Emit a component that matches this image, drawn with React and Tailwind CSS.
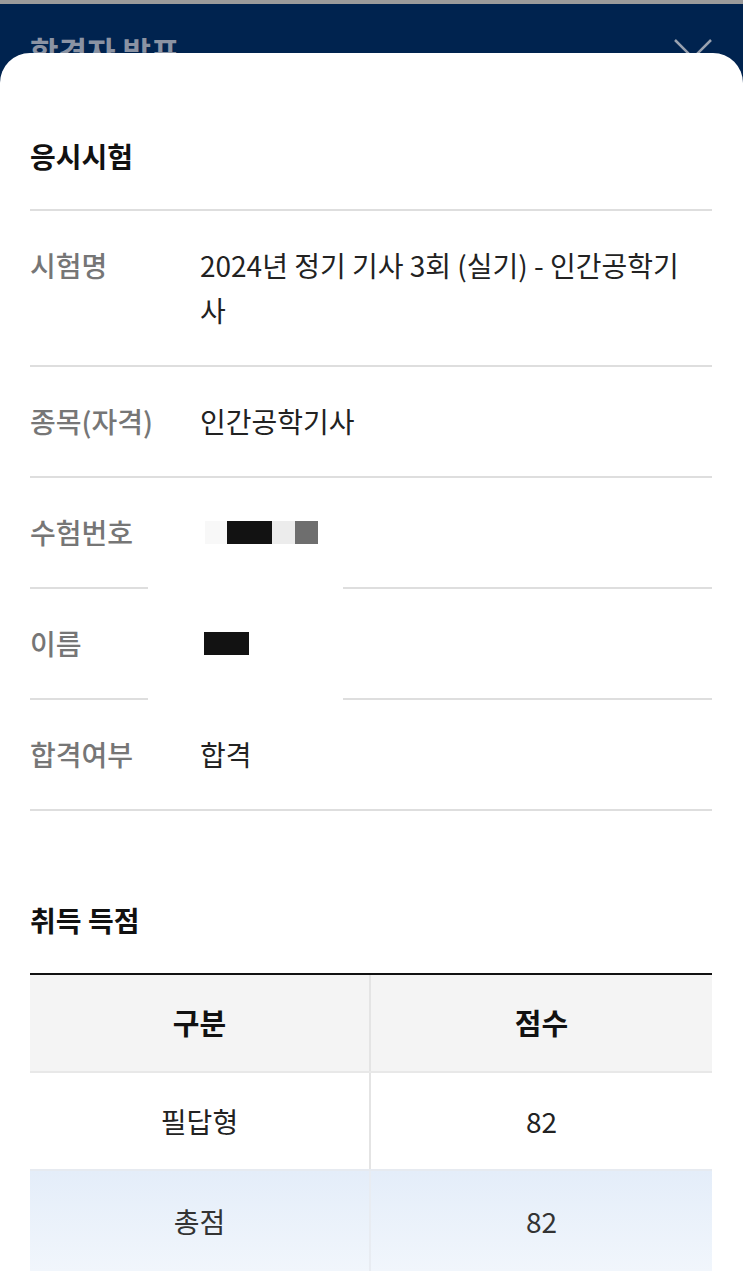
const rows = [
  { label: '시험명', value: ['2024년 정기 기사 3회 (실기) - 인간공학기', '사'] },
  { label: '종목(자격)', value: ['인간공학기사'] },
  { label: '수험번호', redact: 'number', broken: true },
  { label: '이름', redact: 'name', broken: true },
  { label: '합격여부', value: ['합격'] },
];

const Divider = ({ broken }) =>
  broken ? (
    <div className="flex">
      <div className="h-[2px] w-[118px] bg-[#dedede]" />
      <div className="w-[195px]" />
      <div className="h-[2px] flex-1 bg-[#dedede]" />
    </div>
  ) : (
    <div className="h-[2px] bg-[#dedede]" />
  );

const Redacted = ({ kind }) =>
  kind === 'number' ? (
    <div className="flex h-[45px] items-center">
      <div className="ml-[5px] flex h-[23px]">
        <div className="w-[22px] bg-[#f8f8f8]" />
        <div className="w-[45px] bg-[#121212]" />
        <div className="w-[23px] bg-[#ececec]" />
        <div className="w-[23px] bg-[#6e6e6e]" />
      </div>
    </div>
  ) : (
    <div className="flex h-[45px] items-center">
      <div className="ml-[4px] h-[23px] w-[45px] bg-[#121212]" />
    </div>
  );

export default function App() {
  return (
    <div
      className="flex min-h-[1275px] flex-col bg-[#00234f]"
      style={{ fontFamily: '"Noto Sans CJK KR", "Noto Sans", sans-serif' }}
    >
      <div className="h-[4px] bg-[#9b9b9b]" />
      <div className="relative h-[49px] overflow-hidden px-[30px]">
        <div className="pt-[24px] text-[31px] font-bold leading-[45px] text-[#8b93a3]">합격자 발표</div>
        <svg className="absolute left-[673px] top-[34px] h-[40px] w-[40px]" viewBox="0 0 40 40">
          <path d="M2 2 L38 38 M38 2 L2 38" stroke="#9aa2b0" strokeWidth="2.5" fill="none" />
        </svg>
      </div>

      <div className="flex-1 rounded-t-[30px] bg-white pl-[30px] pr-[31px] pt-[81px]">
        <h2 className="mb-[30px] text-[28px] font-bold leading-[45px] text-[#111]">응시시험</h2>
        <Divider />

        {rows.map((row) => (
          <div key={row.label}>
            <div className="flex py-[32px] text-[28px] leading-[45px]">
              <div className="w-[170px] shrink-0 font-medium text-[#767676]">{row.label}</div>
              {row.redact ? (
                <Redacted kind={row.redact} />
              ) : (
                <div className="text-[#222]">
                  {row.value.map((line, i) => (
                    <div key={i}>{line}</div>
                  ))}
                </div>
              )}
            </div>
            <Divider broken={row.broken} />
          </div>
        ))}

        <h2 className="mt-[87px] mb-[30px] text-[28px] font-bold leading-[45px] text-[#111]">취득 득점</h2>

        <div className="border-t-2 border-[#111]">
          <div className="grid h-[96px] grid-cols-2 bg-[#f4f4f4] text-[29px] font-bold text-[#111]">
            <div className="flex items-center justify-center border-r-2 border-[#e4e4e4]">구분</div>
            <div className="flex items-center justify-center">점수</div>
          </div>
          <div className="grid h-[98px] grid-cols-2 border-t-2 border-[#e8e8e8] text-[28px] text-[#222]">
            <div className="flex items-center justify-center border-r-2 border-[#e4e4e4]">필답형</div>
            <div className="flex items-center justify-center">82</div>
          </div>
          <div className="grid h-[102px] grid-cols-2 border-t-2 border-[#e6eaf0] bg-gradient-to-b from-[#e4edf9] to-[#f1f6fc] text-[28px] text-[#333]">
            <div className="flex items-center justify-center border-r-2 border-[#e8ecf2]">총점</div>
            <div className="flex items-center justify-center">82</div>
          </div>
        </div>
      </div>
    </div>
  );
}
